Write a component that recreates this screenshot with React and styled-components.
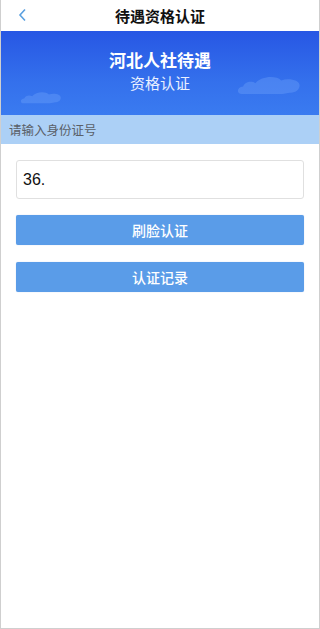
import React from 'react';
import styled, { createGlobalStyle } from 'styled-components';

const GlobalStyle = createGlobalStyle`
  html, body {
    margin: 0;
    padding: 0;
    background: #ffffff;
  }
  body {
    font-family: "Noto Sans CJK SC", "Liberation Sans", sans-serif;
  }
`;

const Screen = styled.div`
  width: 320px;
  height: 629px;
  box-sizing: border-box;
  border: 1px solid #cfcfcf;
  border-top: none;
  background: #fff;
  display: flex;
  flex-direction: column;
  overflow: hidden;
`;

const NavBar = styled.header`
  height: 31px;
  display: flex;
  align-items: center;
  justify-content: center;
  position: relative;
  background: #fff;
`;

const BackButton = styled.span`
  position: absolute;
  left: 16px;
  top: 8px;
  width: 12px;
  height: 14px;
  display: flex;
`;

const NavTitle = styled.h1`
  margin: 0;
  font-size: 15px;
  font-weight: 600;
  color: #111;
`;

const Banner = styled.section`
  height: 84px;
  position: relative;
  background: linear-gradient(180deg, #2757e4 0%, #3470ec 60%, #3a7bf0 100%);
  display: flex;
  flex-direction: column;
  align-items: center;
  padding-top: 17px;
  box-sizing: border-box;
  color: #fff;
`;

const BannerTitle = styled.div`
  font-size: 17px;
  font-weight: 600;
  line-height: 24px;
  position: relative;
  z-index: 1;
`;

const BannerSub = styled.div`
  font-size: 15px;
  line-height: 22px;
  color: #e9f0ff;
  position: relative;
  z-index: 1;
`;

const Cloud = styled.svg`
  position: absolute;
  left: ${(p) => p.$left}px;
  top: ${(p) => p.$top}px;
  opacity: 0.3;
`;

const HintBar = styled.div`
  height: 29px;
  background: #acd0f6;
  color: #5a6068;
  font-size: 12.5px;
  display: flex;
  align-items: center;
  padding-left: 8px;
`;

const Form = styled.div`
  padding: 16px 15px 0 15px;
  display: flex;
  flex-direction: column;
`;

const Input = styled.div`
  height: 39px;
  box-sizing: border-box;
  border: 1px solid #e0e0e0;
  border-radius: 3px;
  display: flex;
  align-items: center;
  padding-left: 6px;
  font-family: "Liberation Sans", sans-serif;
  font-size: 16px;
  color: #111;
  margin-bottom: 16px;
`;

const Button = styled.button`
  height: 30px;
  border: none;
  border-radius: 2px;
  background: #5a9ce8;
  color: #fff;
  font-family: "Noto Sans CJK SC", sans-serif;
  font-size: 14px;
  font-weight: 500;
  padding: 0;
  margin-bottom: ${(p) => p.$gap || 0}px;
  box-shadow: 0 0 1px rgba(60, 120, 200, 0.4);
`;

function CloudShape({ left, top, w }) {
  return (
    <Cloud $left={left} $top={top} width={w} height={w * 0.3} viewBox="0 0 100 30">
      <path
        d="M10 28 C2 28 2 18 12 17 C14 10 24 8 30 12 C38 2 60 0 68 8 C80 4 96 8 95 16 C94 24 86 26 80 26 L70 28 Z"
        fill="#7fb0ff"
      />
    </Cloud>
  );
}

export default function App() {
  return (
    <>
      <GlobalStyle />
      <Screen>
        <NavBar>
          <BackButton>
            <svg width="12" height="14" viewBox="0 0 12 14">
              <path d="M8 1.5 L3 7 L8 12.5" fill="none" stroke="#5aa0e0" strokeWidth="1.6" />
            </svg>
          </BackButton>
          <NavTitle>待遇资格认证</NavTitle>
        </NavBar>
        <Banner>
          <CloudShape left={18} top={60} w={44} />
          <CloudShape left={234} top={44} w={68} />
          <BannerTitle>河北人社待遇</BannerTitle>
          <BannerSub>资格认证</BannerSub>
        </Banner>
        <HintBar>请输入身份证号</HintBar>
        <Form>
          <Input>36.</Input>
          <Button $gap={17}>刷脸认证</Button>
          <Button>认证记录</Button>
        </Form>
      </Screen>
    </>
  );
}
